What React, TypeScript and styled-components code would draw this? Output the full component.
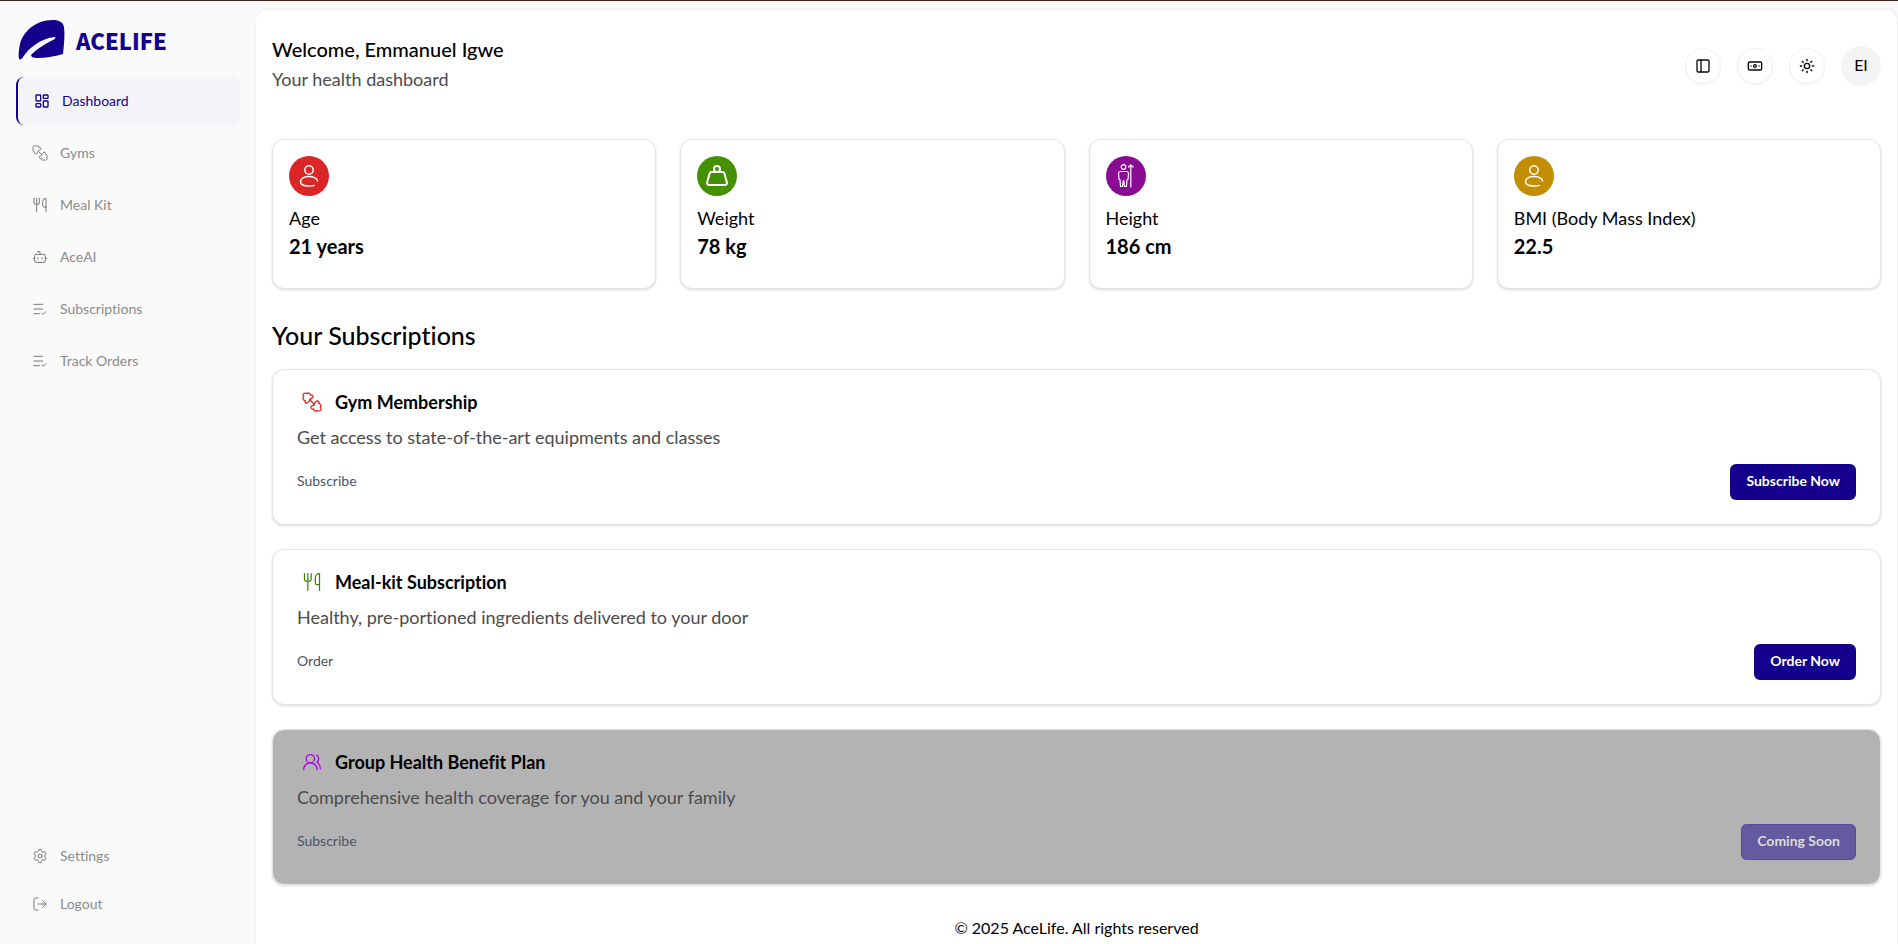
import React from "react";
import styled, { createGlobalStyle, css } from "styled-components";
import {
  Banknote,
  Bot,
  LayoutDashboard,
  ListCheck,
  LogOut,
  PanelLeft,
  Settings,
  Sun,
  UsersRound,
  Utensils,
  Weight,
} from "lucide-react";

const navy = "#14008c";

const GlobalStyle = createGlobalStyle`
  *, *::before, *::after { box-sizing: border-box; }
  body {
    margin: 0;
    background: #fafafa;
    color: #000;
    font-family: Lato, "Open Sans", sans-serif;
    font-variant-ligatures: none;
  }
  h1, h2, h3, p { margin: 0; font-weight: 400; }
  button { font: inherit; cursor: pointer; }
`;

const Shell = styled.div`
  display: flex;
  min-height: 100vh;
  border-top: 1px solid #3b2422;
  background: #fafafa;
`;

const Sidebar = styled.aside`
  flex: 0 0 256px;
  display: flex;
  flex-direction: column;
  justify-content: space-between;
  padding: 16px;
`;

const Brand = styled.a`
  display: flex;
  align-items: center;
  gap: 10px;
  height: 46px;
  margin-bottom: 14px;
  padding-left: 2px;
  color: ${navy};
  text-decoration: none;
  font: 900 22px/32px "Noto Sans CJK JP", Lato, sans-serif;
`;

const NavList = styled.nav<{ $gap: number }>`
  display: flex;
  flex-direction: column;
  gap: ${(p) => p.$gap}px;
`;

const NavLink = styled.a<{ $active?: boolean }>`
  display: flex;
  align-items: center;
  gap: 12px;
  height: 48px;
  padding: 0 16px;
  border-radius: 8px;
  color: #8b8b8b;
  font-size: 14px;
  line-height: 20px;
  text-decoration: none;
  svg { color: #777; }
  ${(p) =>
    p.$active &&
    css`
      border-left: 2px solid ${navy};
      background: #f4f4f8;
      color: ${navy};
      svg { color: ${navy}; }
    `}
`;

const Panel = styled.div`
  flex: 1;
  min-width: 0;
  margin: 8px 0 0;
  padding: 0 16px;
  border: 1px solid #f0f0f0;
  border-bottom: 0;
  border-left-width: 0;
  border-radius: 12px 12px 0 0;
  background: #fff;
  box-shadow: 0 0 2px rgba(0, 0, 0, 0.08);
`;

const Header = styled.header`
  display: flex;
  justify-content: space-between;
  align-items: flex-start;
  height: 129px;
  padding-top: 24px;
`;

const Welcome = styled.h1`
  font-size: 20px;
  font-weight: 500;
  line-height: 30px;
`;

const Lead = styled.p`
  color: #4b4b4b;
  font-size: 18px;
  line-height: 30px;
`;

const Actions = styled.div`
  display: flex;
  align-items: center;
  gap: 16px;
  padding-top: 12px;
`;

const RoundButton = styled.button`
  display: grid;
  place-items: center;
  width: 36px;
  height: 36px;
  padding: 0;
  border: 1px solid #f0f0f0;
  border-radius: 50%;
  background: #fff;
  color: #0a0a0a;
  box-shadow: 0 1px 2px rgba(0, 0, 0, 0.05);
`;

const Avatar = styled.button`
  width: 40px;
  height: 40px;
  padding: 0 0 4px;
  border: 0;
  border-radius: 50%;
  background: #f4f4f5;
  color: #000;
  font-size: 16px;
`;

const card = css`
  border: 1px solid #e4e4e4;
  border-radius: 12px;
  background: #fff;
  box-shadow: 0 1px 3px rgba(0, 0, 0, 0.1), 0 1px 2px rgba(0, 0, 0, 0.06);
`;

const Stats = styled.section`
  display: grid;
  grid-template-columns: repeat(4, minmax(0, 1fr));
  gap: 24px;
`;

const StatCard = styled.article`
  ${card}
  height: 150px;
  padding: 16px;
`;

const Disc = styled.span<{ $color: string }>`
  display: grid;
  place-items: center;
  width: 40px;
  height: 40px;
  margin-bottom: 8px;
  border-radius: 50%;
  background: ${(p) => p.$color};
  color: #fff;
`;

const StatLabel = styled.h2`
  font-size: 18px;
  line-height: 28px;
`;

const StatValue = styled.p`
  font-size: 20px;
  font-weight: 700;
  line-height: 28px;
`;

const SectionTitle = styled.h2`
  padding: 30px 0 18px;
  font-size: 25px;
  font-weight: 500;
  line-height: 32px;
`;

const Plans = styled.section`
  display: flex;
  flex-direction: column;
  gap: 24px;
`;

const PlanCard = styled.article<{ $muted?: boolean }>`
  ${card}
  height: 156px;
  padding: 16px 24px;
  ${(p) => p.$muted && "background: #b3b3b3 padding-box;"}
`;

const PlanTitle = styled.h3<{ $color: string }>`
  display: flex;
  align-items: center;
  gap: 13px;
  padding-left: 5px;
  font-size: 18px;
  line-height: 32px;
  font-weight: 700;
  svg { color: ${(p) => p.$color}; }
`;

const PlanText = styled.p`
  color: #4b4b4b;
  font-size: 18px;
  line-height: 38px;
`;

const PlanFoot = styled.div`
  display: flex;
  justify-content: space-between;
  align-items: center;
  padding-top: 8px;
`;

const PlanNote = styled.span`
  padding-bottom: 4px;
  color: #4b5563;
  font-size: 14px;
`;

const PlanButton = styled.button`
  height: 36px;
  padding: 0 16px 4px;
  border: 0;
  border-radius: 6px;
  background: ${navy};
  color: #fff;
  font-size: 14px;
  font-weight: 700;
  &:disabled {
    background: #645a9f;
    box-shadow: inset 0 0 0 1px #5a4da0;
    color: #dcdcdc;
    cursor: default;
  }
`;

const Footer = styled.footer`
  padding: 31px 0 3px;
  font-size: 16px;
  line-height: 24px;
  text-align: center;
`;

const LeafMark = () => (
  <svg width="48" height="42" viewBox="0 0 48 42" aria-hidden="true">
    <path
      fill="currentColor"
      d="M1 40C2 41 4 40 5 38C11 29 22 20 36 18C38 18 38 20 35 21C27 25 20 29 13 36C13 38 15 39 19 39C29 39 38 37 45 35C46 25 47 16 46 8C45 3 41 1 35 1C17 1 5 13 2 25C1 30 0 36 1 40Z"
    />
  </svg>
);

const DumbbellIcon = ({ size }: { size: number }) => (
  <svg width={size} height={size} viewBox="0 0 24 24" fill="none" stroke="currentColor" strokeWidth="1.5" strokeLinecap="round" strokeLinejoin="round" aria-hidden="true">
    <path d="M9 9l6 6" />
    <path d="M6.500 13a2 2 0 0 1-2.600-2.900a2.500 2.500 0 0 1-1.900-4.300a2.600 2.600 0 0 1 3.800-3.800a2.500 2.500 0 0 1 4.300 1.900a2 2 0 0 1 2.900 2.600c-.8 1.300-2.500.8-3.200 1.800c-.5.800.3 1.600-.6 2.100c-1 .6-1.800 1.600-2.700 2.600z" />
    <path d="M17.500 11a2 2 0 0 1 2.600 2.900a2.500 2.500 0 0 1 1.900 4.300a2.600 2.600 0 0 1-3.800 3.800a2.500 2.500 0 0 1-4.300-1.900a2 2 0 0 1-2.900-2.600c.8-1.300 2.500-.8 3.200-1.800c.5-.8-.3-1.600.6-2.100c1-.6 1.800-1.600 2.700-2.600z" />
  </svg>
);

const PersonIcon = () => (
  <svg width="24" height="24" viewBox="0 0 24 24" fill="none" stroke="currentColor" strokeWidth="1.5" strokeLinecap="round" aria-hidden="true">
    <circle cx="12" cy="6" r="4.200" />
    <path d="M20.500 17c0-2.500-3.800-4.500-8.500-4.500S3.500 14.500 3.500 17.500S6 22 12 22c2.200 0 4-.2 5.300-.6" />
  </svg>
);

const HeightIcon = () => (
  <svg width="24" height="24" viewBox="0 0 24 24" fill="none" stroke="currentColor" strokeWidth="1.200" strokeLinecap="round" strokeLinejoin="round" aria-hidden="true">
    <circle cx="9.500" cy="3" r="2.300" />
    <path d="M6.500 7.500h6a2 2 0 0 1 2 2l-.5 6h-1l-.5 7h-2l-.8-6h-.4l-.8 6h-2l-.5-7h-1l-.5-6a2 2 0 0 1 2-2zM16.800 23V1M14.600 3L16.800 .8L19 3" />
  </svg>
);

const mainNav = [
  { label: "Gyms", icon: <DumbbellIcon size={16} /> },
  { label: "Meal Kit", icon: <Utensils size={16} strokeWidth={1.5} /> },
  { label: "AceAI", icon: <Bot size={16} strokeWidth={1.5} /> },
  { label: "Subscriptions", icon: <ListCheck size={16} strokeWidth={1.5} /> },
  { label: "Track Orders", icon: <ListCheck size={16} strokeWidth={1.5} /> },
];

const stats = [
  { label: "Age", value: "21 years", color: "#dc2626", icon: <PersonIcon /> },
  { label: "Weight", value: "78 kg", color: "#459000", icon: <Weight size={24} /> },
  { label: "Height", value: "186 cm", color: "#8b0a93", icon: <HeightIcon /> },
  { label: "BMI (Body Mass Index)", value: "22.5", color: "#c28d00", icon: <PersonIcon /> },
];

const plans = [
  {
    title: "Gym Membership",
    text: "Get access to state-of-the-art equipments and classes",
    note: "Subscribe",
    action: "Subscribe Now",
    color: "#dc1f1f",
    icon: <DumbbellIcon size={20} />,
  },
  {
    title: "Meal-kit Subscription",
    text: "Healthy, pre-portioned ingredients delivered to your door",
    note: "Order",
    action: "Order Now",
    color: "#3a8a06",
    icon: <Utensils size={20} strokeWidth={1.5} />,
  },
  {
    title: "Group Health Benefit Plan",
    text: "Comprehensive health coverage for you and your family",
    note: "Subscribe",
    action: "Coming Soon",
    color: "#a800e8",
    icon: <UsersRound size={20} strokeWidth={1.5} />,
    muted: true,
  },
];

export default function App() {
  return (
    <>
      <GlobalStyle />
      <Shell>
        <Sidebar>
          <div>
            <Brand href="#">
              <LeafMark />
              ACELIFE
            </Brand>
            <NavList $gap={4} aria-label="Main">
              <NavLink href="#" $active>
                <LayoutDashboard size={16} />
                Dashboard
              </NavLink>
              {mainNav.map((item) => (
                <NavLink href="#" key={item.label}>
                  {item.icon}
                  {item.label}
                </NavLink>
              ))}
            </NavList>
          </div>
          <NavList $gap={0} aria-label="Account">
            <NavLink href="#">
              <Settings size={16} strokeWidth={1.5} />
              Settings
            </NavLink>
            <NavLink href="#">
              <LogOut size={16} strokeWidth={1.5} />
              Logout
            </NavLink>
          </NavList>
        </Sidebar>
        <Panel>
          <Header>
            <div>
              <Welcome>Welcome, Emmanuel Igwe</Welcome>
              <Lead>Your health dashboard</Lead>
            </div>
            <Actions>
              <RoundButton aria-label="Toggle sidebar"><PanelLeft size={16} /></RoundButton>
              <RoundButton aria-label="Payments"><Banknote size={16} /></RoundButton>
              <RoundButton aria-label="Toggle theme"><Sun size={16} /></RoundButton>
              <Avatar>EI</Avatar>
            </Actions>
          </Header>
          <main>
            <Stats>
              {stats.map((s) => (
                <StatCard key={s.label}>
                  <Disc $color={s.color}>{s.icon}</Disc>
                  <StatLabel>{s.label}</StatLabel>
                  <StatValue>{s.value}</StatValue>
                </StatCard>
              ))}
            </Stats>
            <SectionTitle>Your Subscriptions</SectionTitle>
            <Plans>
              {plans.map((p) => (
                <PlanCard key={p.title} $muted={p.muted}>
                  <PlanTitle $color={p.color}>
                    {p.icon}
                    {p.title}
                  </PlanTitle>
                  <PlanText>{p.text}</PlanText>
                  <PlanFoot>
                    <PlanNote>{p.note}</PlanNote>
                    <PlanButton disabled={p.muted}>{p.action}</PlanButton>
                  </PlanFoot>
                </PlanCard>
              ))}
            </Plans>
          </main>
          <Footer>© 2025 AceLife. All rights reserved</Footer>
        </Panel>
      </Shell>
    </>
  );
}
